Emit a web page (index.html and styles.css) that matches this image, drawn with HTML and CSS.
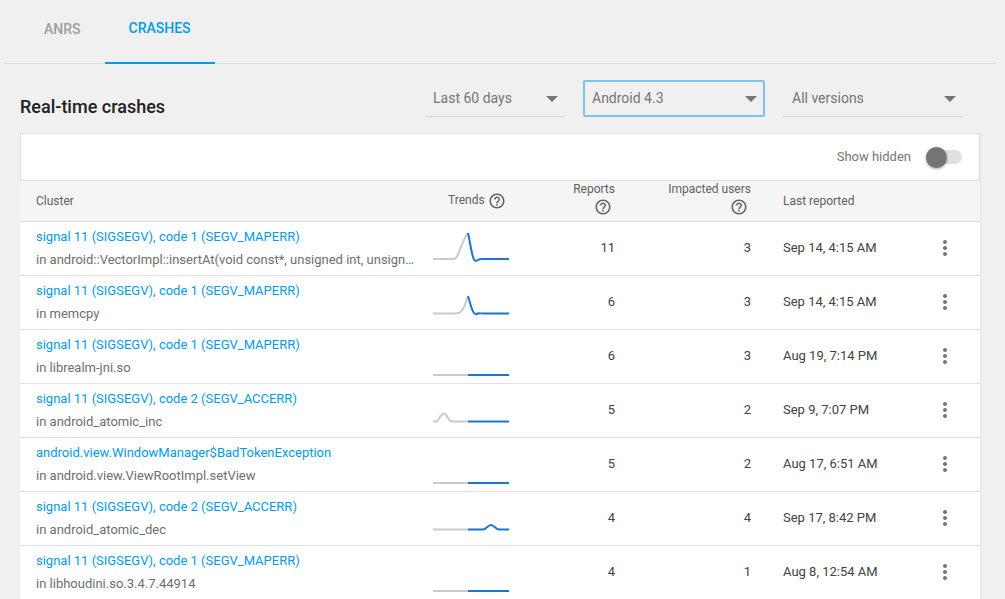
FILE: index.html
```html
<!DOCTYPE html>
<html lang="en">
<head>
<meta charset="utf-8">
<title>Real-time crashes</title>
<link rel="stylesheet" href="styles.css">
</head>
<body>
<svg class="defs" width="0" height="0" aria-hidden="true">
  <symbol id="help" viewBox="0 0 24 24"><path d="M11 18h2v-2h-2v2zm1-16C6.48 2 2 6.48 2 12s4.48 10 10 10 10-4.48 10-10S17.52 2 12 2zm0 18c-4.41 0-8-3.59-8-8s3.59-8 8-8 8 3.59 8 8-3.59 8-8 8zm0-14c-2.21 0-4 1.79-4 4h2c0-1.1.9-2 2-2s2 .9 2 2c0 2-3 1.75-3 5h2c0-2.25 3-2.5 3-5 0-2.21-1.79-4-4-4z"/></symbol>
  <symbol id="more" viewBox="0 0 24 24"><path d="M12 8c1.1 0 2-.9 2-2s-.9-2-2-2-2 .9-2 2 .9 2 2 2zm0 2c-1.1 0-2 .9-2 2s.9 2 2 2 2-.9 2-2-.9-2-2-2zm0 6c-1.1 0-2 .9-2 2s.9 2 2 2 2-.9 2-2-.9-2-2-2z"/></symbol>
</svg>
<nav class="tabs">
  <a class="tab">ANRS</a>
  <a class="tab active">CRASHES</a>
</nav>
<header class="toolbar">
  <h1 class="title">Real-time crashes</h1>
  <div class="filters">
    <div class="select w140"><span>Last 60 days</span><i class="caret"></i></div>
    <div class="select focused"><span>Android 4.3</span><i class="caret"></i></div>
    <div class="select w180"><span>All versions</span><i class="caret"></i></div>
  </div>
</header>
<section class="card">
  <div class="card-head">
    <span class="hidden-label">Show hidden</span>
    <div class="toggle"><i class="knob"></i></div>
  </div>
  <div class="grid head">
    <div class="h-cluster">Cluster</div>
    <div class="h-trends">Trends <svg class="help"><use href="#help"/></svg></div>
    <div class="num stack">Reports <svg class="help"><use href="#help"/></svg></div>
    <div class="num stack">Impacted users <svg class="help"><use href="#help"/></svg></div>
    <div class="h-last">Last reported</div>
    <div></div>
  </div>

  <div class="grid row">
    <div class="cluster"><a class="link">signal 11 (SIGSEGV), code 1 (SEGV_MAPERR)</a><p class="sub">in android::VectorImpl::insertAt(void const*, unsigned int, unsigned int)</p></div>
    <svg class="spark" viewBox="0 0 76 54"><path class="old" d="M0 37H20C23 37 24 35 26 30C29 22 32 15 35 11"/><path class="new" d="M35 11C37 20 38 28 40 35C41 39 43 39.500 45 38C46 37 48 37 50 37H76"/></svg>
    <div class="num">11</div>
    <div class="num">3</div>
    <div class="last">Sep 14, 4:15 AM</div>
    <svg class="more"><use href="#more"/></svg>
  </div>
  <div class="grid row">
    <div class="cluster"><a class="link">signal 11 (SIGSEGV), code 1 (SEGV_MAPERR)</a><p class="sub">in memcpy</p></div>
    <svg class="spark" viewBox="0 0 76 54"><path class="old" d="M0 37.500H22C26 37.500 29 36 31 31C33 27 34 23 35 20"/><path class="new" d="M35 20C37 26 38 32 40 35.500C41 38 43 38.500 45 37.500C46 37 48 37.500 50 37.500H76"/></svg>
    <div class="num">6</div>
    <div class="num">3</div>
    <div class="last">Sep 14, 4:15 AM</div>
    <svg class="more"><use href="#more"/></svg>
  </div>
  <div class="grid row">
    <div class="cluster"><a class="link">signal 11 (SIGSEGV), code 1 (SEGV_MAPERR)</a><p class="sub">in librealm-jni.so</p></div>
    <svg class="spark" viewBox="0 0 76 54"><path class="old" d="M0 45H35"/><path class="new" d="M35 45H76"/></svg>
    <div class="num">6</div>
    <div class="num">3</div>
    <div class="last">Aug 19, 7:14 PM</div>
    <svg class="more"><use href="#more"/></svg>
  </div>
  <div class="grid row">
    <div class="cluster"><a class="link">signal 11 (SIGSEGV), code 2 (SEGV_ACCERR)</a><p class="sub">in android_atomic_inc</p></div>
    <svg class="spark" viewBox="0 0 76 54"><path class="old" d="M0 37.500H3C6 37.500 7 29.500 11 29.500C14 29.500 15 37.500 19 37.500H35"/><path class="new" d="M35 37.500H76"/></svg>
    <div class="num">5</div>
    <div class="num">2</div>
    <div class="last">Sep 9, 7:07 PM</div>
    <svg class="more"><use href="#more"/></svg>
  </div>
  <div class="grid row">
    <div class="cluster"><a class="link">android.view.WindowManager$BadTokenException</a><p class="sub">in android.view.ViewRootImpl.setView</p></div>
    <svg class="spark" viewBox="0 0 76 54"><path class="old" d="M0 45H35"/><path class="new" d="M35 45H76"/></svg>
    <div class="num">5</div>
    <div class="num">2</div>
    <div class="last">Aug 17, 6:51 AM</div>
    <svg class="more"><use href="#more"/></svg>
  </div>
  <div class="grid row">
    <div class="cluster"><a class="link">signal 11 (SIGSEGV), code 2 (SEGV_ACCERR)</a><p class="sub">in android_atomic_dec</p></div>
    <svg class="spark" viewBox="0 0 76 54"><path class="old" d="M0 37.500H35"/><path class="new" d="M35 37.500H50C53 37.500 55 33 58 33C61 33 63 37.500 66 37.500H76"/></svg>
    <div class="num">4</div>
    <div class="num">4</div>
    <div class="last">Sep 17, 8:42 PM</div>
    <svg class="more"><use href="#more"/></svg>
  </div>
  <div class="grid row">
    <div class="cluster"><a class="link">signal 11 (SIGSEGV), code 1 (SEGV_MAPERR)</a><p class="sub">in libhoudini.so.3.4.7.44914</p></div>
    <svg class="spark" viewBox="0 0 76 54"><path class="old" d="M0 45H35"/><path class="new" d="M35 45H76"/></svg>
    <div class="num">4</div>
    <div class="num">1</div>
    <div class="last">Aug 8, 12:54 AM</div>
    <svg class="more"><use href="#more"/></svg>
  </div>
</section>
</body>
</html>
```

FILE: styles.css
```css
* { box-sizing: border-box; }
html, body { height: 100%; }
body {
  margin: 0;
  overflow: hidden;
  background: #f0f0f0;
  font-family: Roboto, "Liberation Sans", sans-serif;
  font-size: 13px;
  color: #424242;
}
.defs { position: absolute; }

.tabs {
  display: flex;
  height: 64px;
  width: 992px;
  margin-left: 4px;
  padding-left: 16px;
  border-bottom: 1px solid #dcdcdc;
}
.tab {
  display: flex;
  align-items: center;
  justify-content: center;
  height: 64px;
  padding: 0 24px 6px;
  font-size: 14px;
  font-weight: 500;
  color: #9e9e9e;
}
.tab.active {
  width: 110px;
  color: #039be5;
  border-bottom: 2px solid #039be5;
}

.toolbar {
  display: flex;
  justify-content: space-between;
  height: 69px;
  padding: 17px 17px 0 20px;
  width: 980px;
}
.title {
  margin: 15px 0 0;
  font-size: 18px;
  line-height: 21px;
  font-weight: 500;
  color: #212121;
}
.filters { display: flex; gap: 18px; }
.select {
  display: flex;
  align-items: center;
  justify-content: space-between;
  height: 36px;
  padding: 0 6px 0 8px;
  font-size: 14px;
  color: #757575;
  border-bottom: 1px solid #d8d8d8;
}
.select span { margin-top: -1px; }
.w140 { width: 140px; }
.w180 { width: 180px; padding-left: 9px; }
.focused {
  width: 182px;
  height: 37px;
  margin-top: -1px;
  border: 2px solid #7cc4ec;
  border-radius: 2px;
  padding: 0 5px 0 7px;
}
.focused span { margin-top: -2px; }
.caret {
  width: 0;
  height: 0;
  margin-right: 1px;
  border-left: 6px solid transparent;
  border-right: 6px solid transparent;
  border-top: 6px solid #757575;
}

.card {
  width: 960px;
  margin-left: 20px;
  background: #fff;
  box-shadow: 1px 0 0 #e4e4e4;
}
.card-head {
  display: flex;
  align-items: center;
  justify-content: flex-end;
  gap: 15px;
  height: 48px;
  padding-right: 17px;
  border: 1px solid #e0e0e0;
}
.hidden-label { color: #757575; margin-top: -2px; }
.toggle {
  position: relative;
  width: 36px;
  height: 14px;
  border-radius: 7px;
  background: #e0e0e0;
}
.knob {
  position: absolute;
  left: 0;
  top: -3.500px;
  width: 21px;
  height: 21px;
  border-radius: 50%;
  background: #757575;
  box-shadow: 0 1px 3px rgba(0, 0, 0, .35);
}

.grid {
  display: grid;
  grid-template-columns: 413px 76px 106px 136px 179px 50px;
  align-items: center;
  border-bottom: 1px solid #e0e0e0;
}
.head {
  height: 41px;
  background: #f5f5f5;
  color: #616161;
  font-size: 12px;
}
.row { height: 54px; }
.h-cluster { padding-left: 16px; }
.h-trends {
  display: flex;
  align-items: center;
  gap: 3px;
  padding-left: 15px;
  white-space: nowrap;
  margin-top: -2px;
}
.help { width: 18px; height: 18px; fill: #616161; flex: none; }
.h-trends .help { margin-top: 2px; }
.num { text-align: right; }
.row .num, .row .last { margin-bottom: 4px; }
.row .more { margin-bottom: 2px; }
.stack {
  display: flex;
  flex-direction: column;
  align-items: flex-end;
  line-height: 14px;
  white-space: nowrap;
  margin-top: -5px;
}
.stack .help { margin-top: 2px; margin-right: 3px; }
.h-last { padding-left: 32px; }

.cluster { padding: 0 17px 2px 16px; min-width: 0; }
.link {
  display: block;
  line-height: 16px;
  color: #039be5;
  white-space: nowrap;
}
.sub {
  margin: 7px 0 0;
  line-height: 16px;
  color: #6e6e6e;
  white-space: nowrap;
  overflow: hidden;
  text-overflow: ellipsis;
}
.spark { width: 76px; height: 54px; display: block; align-self: start; }
.spark path { fill: none; stroke-width: 2; }
.old { stroke: #cacaca; }
.new { stroke: #1976d2; }
.last { padding-left: 32px; color: #424242; white-space: nowrap; }
.more { width: 24px; height: 24px; fill: #757575; justify-self: start; margin-left: 3px; }
```
